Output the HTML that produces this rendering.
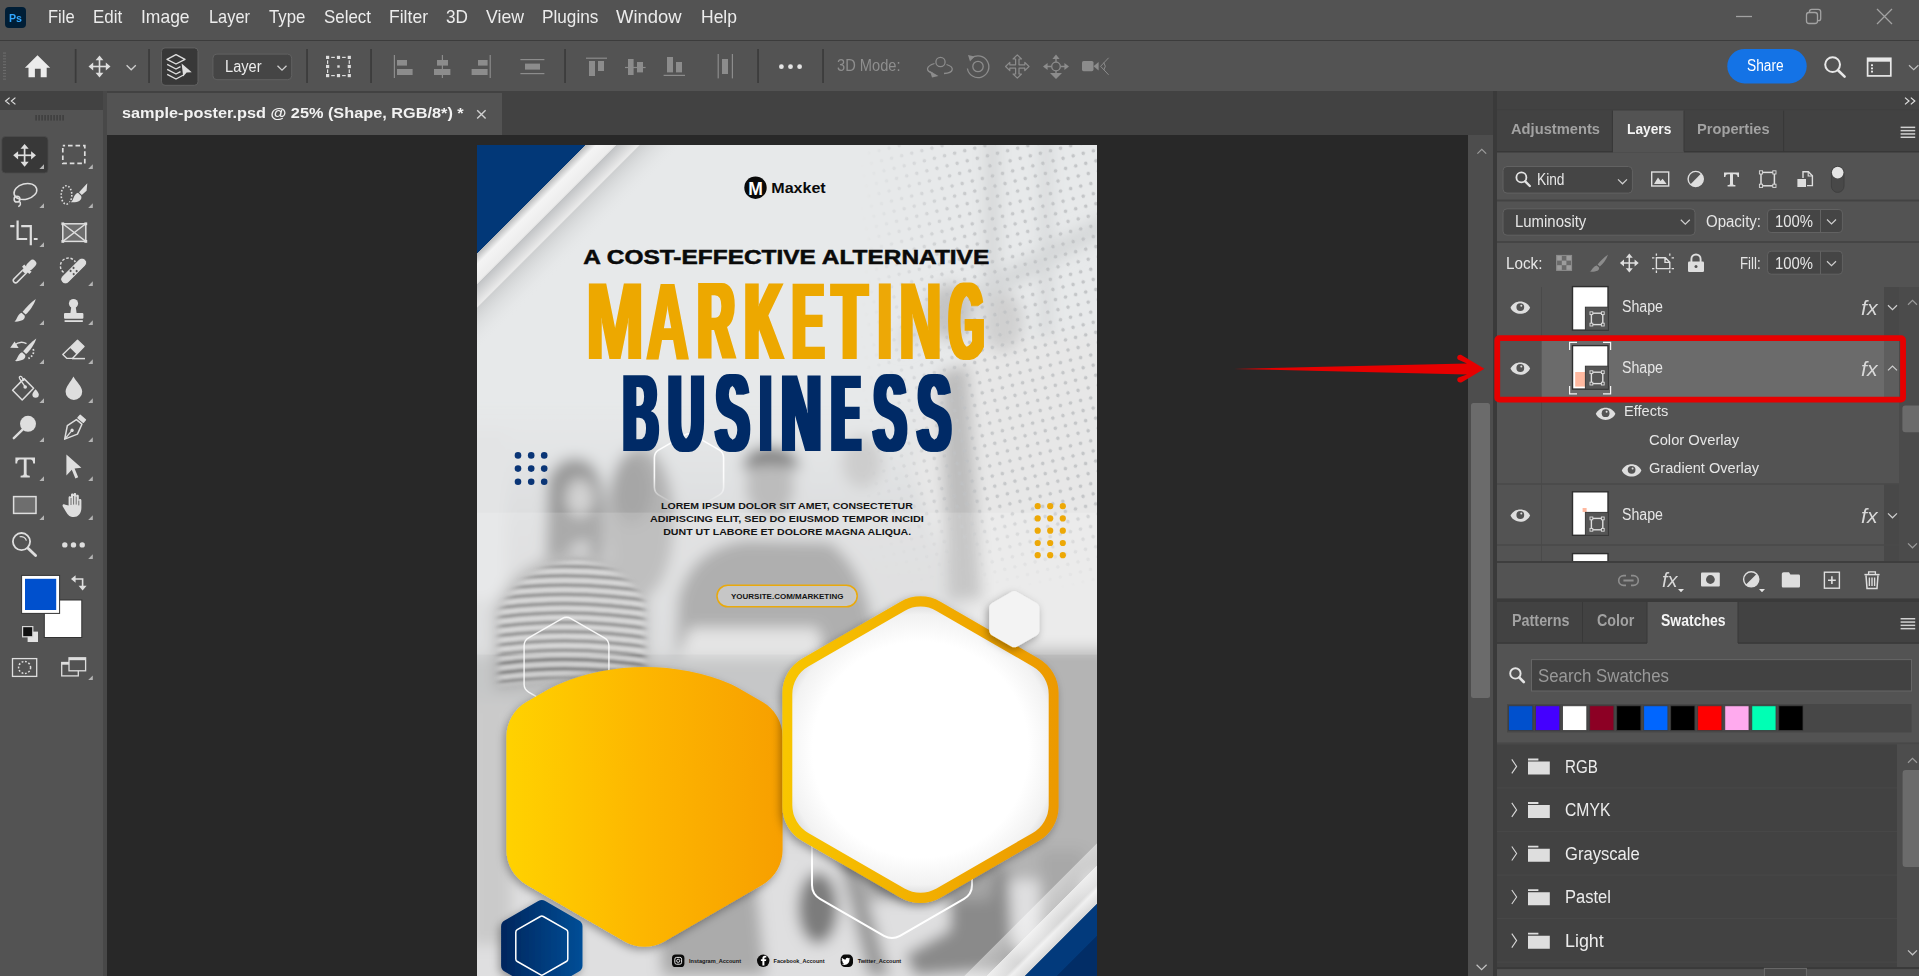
<!DOCTYPE html>
<html lang="en"><head><meta charset="utf-8"><title>sample-poster.psd @ 25% - Photoshop</title>
<style>
html,body{margin:0;padding:0;background:#535353;overflow:hidden}
body{width:1919px;height:976px;position:relative;font-family:"Liberation Sans",sans-serif;color:#e6e6e6}
.t{position:absolute;white-space:nowrap;transform-origin:0 0;line-height:1;display:block}
svg{display:block;overflow:hidden}
svg text{font-family:"Liberation Sans",sans-serif}
</style></head>
<body>
<div id="menubar" style="position:absolute;left:0;top:0;width:1919px;height:40px;background:#535353;border-bottom:1.5px solid #3c3c3c">
<div style="position:absolute;left:4.5px;top:7px;width:21px;height:20.5px;border-radius:4px;background:#001e36"></div>
<span class="t" style="left:8.6px;top:12.5px;font-size:11.5px;color:#31a8ff;font-weight:bold;transform:scaleX(0.9242);">Ps</span>
<span class="t" style="left:48.0px;top:7.8px;font-size:18.2px;color:#ececec;transform:scaleX(0.9070);">File</span>
<span class="t" style="left:93.4px;top:7.8px;font-size:18.2px;color:#ececec;transform:scaleX(0.9311);">Edit</span>
<span class="t" style="left:141.4px;top:7.8px;font-size:18.2px;color:#ececec;transform:scaleX(0.9608);">Image</span>
<span class="t" style="left:209.0px;top:7.8px;font-size:18.2px;color:#ececec;transform:scaleX(0.9005);">Layer</span>
<span class="t" style="left:268.6px;top:7.8px;font-size:18.2px;color:#ececec;transform:scaleX(0.9225);">Type</span>
<span class="t" style="left:324.0px;top:7.8px;font-size:18.2px;color:#ececec;transform:scaleX(0.9291);">Select</span>
<span class="t" style="left:389.0px;top:7.8px;font-size:18.2px;color:#ececec;transform:scaleX(0.9643);">Filter</span>
<span class="t" style="left:445.6px;top:7.8px;font-size:18.2px;color:#ececec;transform:scaleX(0.9456);">3D</span>
<span class="t" style="left:486.0px;top:7.8px;font-size:18.2px;color:#ececec;transform:scaleX(0.9713);">View</span>
<span class="t" style="left:542.0px;top:7.8px;font-size:18.2px;color:#ececec;transform:scaleX(0.9448);">Plugins</span>
<span class="t" style="left:616.4px;top:7.8px;font-size:18.2px;color:#ececec;transform:scaleX(1.0134);">Window</span>
<span class="t" style="left:701.0px;top:7.8px;font-size:18.2px;color:#ececec;transform:scaleX(0.9617);">Help</span>
<svg style="position:absolute;left:1720px;top:0px;" width="199" height="40" viewBox="0 0 199 40"><g stroke="#a2a2a2" stroke-width="1.3" fill="none"><path d="M16,16.5 H32"/><rect x="86.5" y="12.5" width="11" height="11" rx="2.5"/><path d="M89.5,12 V11.5 a2.2,2.2 0 0 1 2.2,-2.2 H98.2 a2.5,2.5 0 0 1 2.5,2.5 V18.5 a2.2,2.2 0 0 1 -2.2,2.2 H98"/><path d="M157,9 L172,24 M172,9 L157,24"/></g></svg>
</div>
<div id="optionsbar" style="position:absolute;left:0;top:41.5px;width:1919px;height:49.5px;background:#535353"></div>
<svg style="position:absolute;left:0px;top:41px;" width="1919" height="50" viewBox="0 41 1919 50"><rect x="3" y="52.5" width="3" height="1.1" fill="#6c6c6c"/><rect x="3" y="55.4" width="3" height="1.1" fill="#6c6c6c"/><rect x="3" y="58.3" width="3" height="1.1" fill="#6c6c6c"/><rect x="3" y="61.2" width="3" height="1.1" fill="#6c6c6c"/><rect x="3" y="64.1" width="3" height="1.1" fill="#6c6c6c"/><rect x="3" y="67.0" width="3" height="1.1" fill="#6c6c6c"/><rect x="3" y="69.9" width="3" height="1.1" fill="#6c6c6c"/><rect x="3" y="72.8" width="3" height="1.1" fill="#6c6c6c"/><rect x="3" y="75.7" width="3" height="1.1" fill="#6c6c6c"/><rect x="3" y="78.6" width="3" height="1.1" fill="#6c6c6c"/><rect x="74.8" y="49" width="1.7" height="34" fill="#3b3b3b"/><rect x="148.2" y="49" width="1.7" height="34" fill="#3b3b3b"/><rect x="306.2" y="49" width="1.7" height="34" fill="#3b3b3b"/><rect x="370.2" y="49" width="1.7" height="34" fill="#3b3b3b"/><rect x="564.2" y="49" width="1.7" height="34" fill="#3b3b3b"/><rect x="757.2" y="49" width="1.7" height="34" fill="#3b3b3b"/><rect x="822.2" y="49" width="1.7" height="34" fill="#3b3b3b"/><path fill="#ececec" d="M37.5,55.2 L50.2,67.7 L46.7,67.7 L46.7,77.2 L40.7,77.2 L40.7,68.8 L34.9,68.8 L34.9,77.2 L28.5,77.2 L28.5,67.7 L24.9,67.7 Z"/><g fill="#dedede" stroke="none"><rect x="90.5" y="65.7" width="18" height="1.6"/><rect x="98.7" y="57.5" width="1.6" height="18"/><path d="M99.5,55.5 l3.9,4.7 h-7.8z M99.5,77.5 l3.9,-4.7 h-7.8z M88.5,66.5 l4.7,-3.9 v7.8z M110.5,66.5 l-4.7,-3.9 v7.8z"/></g><path d="M126.6,65.2 L131.2,69.8 L135.8,65.2" fill="none" stroke="#cfcfcf" stroke-width="1.3"/><rect x="161.5" y="47.9" width="36.5" height="37.4" rx="3.5" fill="#383838" stroke="#626262" stroke-width="1"/><g fill="none" stroke="#dedede" stroke-width="1.4" stroke-linejoin="round"><path d="M176,54.6 L185,59.3 L176,64 L167,59.3 Z"/><path d="M167.2,64.3 L176,69 L180.5,66.6"/><path d="M167.2,69.3 L176,74 L180.5,71.6"/><path d="M167.2,74.3 L176,79 L183.5,75"/></g><path fill="#dedede" d="M181.6,63.4 L191.8,72.2 L186.6,72.6 L183.2,76.6 Z"/><rect x="212.9" y="54.1" width="78.8" height="25.6" rx="4" fill="#454545" stroke="#626262" stroke-width="1"/><path d="M277.5,65.8 L282,70.2 L286.5,65.8" fill="none" stroke="#cfcfcf" stroke-width="1.3"/><g fill="#dedede"><rect x="326.0" y="55.8" width="3.2" height="3.2"/><rect x="326.0" y="64.9" width="3.2" height="3.2"/><rect x="326.0" y="74.0" width="3.2" height="3.2"/><rect x="336.9" y="55.8" width="3.2" height="3.2"/><rect x="337.3" y="65.3" width="2.4" height="2.4"/><rect x="336.9" y="74.0" width="3.2" height="3.2"/><rect x="347.7" y="55.8" width="3.2" height="3.2"/><rect x="347.7" y="64.9" width="3.2" height="3.2"/><rect x="347.7" y="74.0" width="3.2" height="3.2"/><rect x="331.2" y="56.8" width="3.6" height="1.2"/><rect x="342.1" y="56.8" width="3.6" height="1.2"/><rect x="331.2" y="75.0" width="3.6" height="1.2"/><rect x="342.1" y="75.0" width="3.6" height="1.2"/><rect x="327.0" y="60.3" width="1.2" height="3.6"/><rect x="327.0" y="69.4" width="1.2" height="3.6"/><rect x="348.7" y="60.3" width="1.2" height="3.6"/><rect x="348.7" y="69.4" width="1.2" height="3.6"/></g><g fill="#8c8c8c"><rect x="393.8" y="55" width="1.2" height="23"/><rect x="397" y="60" width="10" height="5.6"/><rect x="397" y="69" width="15.6" height="6"/><rect x="441.8" y="55" width="1.2" height="23"/><rect x="437" y="60" width="11" height="5.6"/><rect x="434" y="69" width="16.4" height="6"/><rect x="489.6" y="55" width="1.2" height="23"/><rect x="478" y="60" width="9.6" height="5.6"/><rect x="471.6" y="69" width="16" height="6"/><rect x="520.4" y="59" width="24" height="1.2"/><rect x="520.4" y="73" width="24" height="1.2"/><rect x="525" y="63.6" width="15" height="6"/><rect x="586" y="57.6" width="21" height="1.2"/><rect x="589" y="61" width="6" height="15"/><rect x="598" y="61" width="6" height="10"/><rect x="625" y="66.9" width="20.6" height="1.2"/><rect x="628" y="59" width="5.6" height="16"/><rect x="637" y="62" width="6" height="10.4"/><rect x="663.6" y="74.8" width="21.4" height="1.2"/><rect x="667" y="57" width="6" height="15.4"/><rect x="676" y="62" width="6" height="10.4"/><rect x="717.6" y="54" width="1.2" height="24.4"/><rect x="731.8" y="54" width="1.2" height="24.4"/><rect x="722" y="59" width="6" height="15"/></g><g fill="#e4e4e4"><circle cx="781.4" cy="66.7" r="2.4"/><circle cx="790.5" cy="66.7" r="2.4"/><circle cx="799.6" cy="66.7" r="2.4"/></g><g fill="none" stroke="#8c8c8c" stroke-width="1.3"><circle cx="940.5" cy="62" r="4.6"/><path d="M934.5,63.5 C926,66 925,71 933,73.5 M944,73.5 C954,73 955,67 946.5,64.5"/><circle cx="978" cy="66.5" r="5.2"/><path d="M971.5,58.2 A10.8,10.8 0 1 1 967.4,68.5"/></g><path fill="#8c8c8c" d="M930,71 L938.5,76 L932,77.5 Z M968,55 L974.5,56.5 L970,61.5 Z"/><path d="M1017.3,54.8 l4.2,4.2 h-2.5 V64.8 H1024.8 v-2.5 l4.2,4.2 l-4.2,4.2 v-2.5 H1019.0 V74.0 h2.5 l-4.2,4.2 l-4.2,-4.2 h2.5 V68.2 H1009.8 v2.5 l-4.2,-4.2 l4.2,-4.2 v2.5 H1015.5999999999999 V59.0 h-2.5 Z" fill="none" stroke="#8c8c8c" stroke-width="1.2" stroke-linejoin="round"/><circle cx="1056" cy="66.5" r="4.3" fill="none" stroke="#8c8c8c" stroke-width="1.3"/><path fill="#8c8c8c" d="M1056,54.5 l3.6,4.4 h-7.2z M1043,66.5 l4.6,-3.6 v7.2z M1069,66.5 l-4.6,-3.6 v7.2z M1056,79.0 l6,-6 h-12z"/><g stroke="#8c8c8c" stroke-width="1.4"><path d="M1056,58.5 v3.5 M1047,66.5 h4.5 M1065,66.5 h-4.5 M1056,73.5 v-3"/></g><rect x="1082" y="61" width="11.5" height="10.2" rx="1.6" fill="#8c8c8c"/><path fill="#8c8c8c" d="M1093.5,66.2 L1098.6,62 V70.6 Z"/><path d="M1108.6,57.8 L1100.6,66.3 L1108.6,74.8" fill="none" stroke="#8c8c8c" stroke-width="1"/><path d="M1103.8,62.6 Q1106.8,66.3 1103.8,70" fill="none" stroke="#8c8c8c" stroke-width="1"/><rect x="1727.3" y="49" width="79.4" height="34.4" rx="17.2" fill="#1473e6"/><circle cx="1832.6" cy="64.6" r="7.4" fill="none" stroke="#e8e8e8" stroke-width="2"/><path d="M1838,70.2 L1844.6,76.6" stroke="#e8e8e8" stroke-width="2.6" stroke-linecap="round"/><rect x="1867.6" y="58.3" width="23.2" height="17.6" fill="none" stroke="#e8e8e8" stroke-width="1.7"/><rect x="1867.6" y="58.3" width="23.2" height="3.4" fill="#e8e8e8"/><g fill="#e8e8e8"><rect x="1871" y="64.3" width="2" height="1.8"/><rect x="1871" y="67.5" width="2" height="1.8"/><rect x="1871" y="70.7" width="2" height="1.8"/></g><path d="M1909,65.3 L1913.7,69.6 L1918.4,65.3" fill="none" stroke="#bdbdbd" stroke-width="1.2"/></svg>
<span class="t" style="left:225.0px;top:58.6px;font-size:15.8px;color:#ececec;transform:scaleX(0.9260);">Layer</span>
<span class="t" style="left:837.0px;top:58.0px;font-size:15.6px;color:#8e8e8e;transform:scaleX(0.9403);">3D Mode:</span>
<span class="t" style="left:1746.7px;top:58.4px;font-size:15.6px;color:#ffffff;transform:scaleX(0.8792);">Share</span>
<div id="tools-head" style="position:absolute;left:0;top:91px;width:103px;height:18.5px;background:#424242"></div>
<div id="tools" style="position:absolute;left:0;top:109.5px;width:103px;height:867px;background:#535353"></div>
<svg style="position:absolute;left:0px;top:91px;" width="104" height="885" viewBox="0 91 104 885"><path d="M9.6,97.6 L5.6,101 L9.6,104.4 M15.4,97.6 L11.4,101 L15.4,104.4" fill="none" stroke="#e0e0e0" stroke-width="1.2"/><rect x="35.3" y="115" width="1.6" height="5.6" fill="#3f3f3f"/><rect x="38.3" y="115" width="1.6" height="5.6" fill="#3f3f3f"/><rect x="41.3" y="115" width="1.6" height="5.6" fill="#3f3f3f"/><rect x="44.3" y="115" width="1.6" height="5.6" fill="#3f3f3f"/><rect x="47.3" y="115" width="1.6" height="5.6" fill="#3f3f3f"/><rect x="50.3" y="115" width="1.6" height="5.6" fill="#3f3f3f"/><rect x="53.3" y="115" width="1.6" height="5.6" fill="#3f3f3f"/><rect x="56.3" y="115" width="1.6" height="5.6" fill="#3f3f3f"/><rect x="59.3" y="115" width="1.6" height="5.6" fill="#3f3f3f"/><rect x="62.3" y="115" width="1.6" height="5.6" fill="#3f3f3f"/><rect x="1.8" y="136.6" width="46.2" height="36.4" rx="3.5" fill="#383838" stroke="#4b4b4b" stroke-width="0.8"/><path d="M44.0,164.3 V168.9 H39.4 Z" fill="#b4b4b4"/><path d="M92.8,164.3 V168.9 H88.2 Z" fill="#b4b4b4"/><path d="M44.0,203.3 V207.9 H39.4 Z" fill="#b4b4b4"/><path d="M92.8,203.3 V207.9 H88.2 Z" fill="#b4b4b4"/><path d="M44.0,242.3 V246.9 H39.4 Z" fill="#b4b4b4"/><path d="M44.0,281.3 V285.90000000000003 H39.4 Z" fill="#b4b4b4"/><path d="M92.8,281.3 V285.90000000000003 H88.2 Z" fill="#b4b4b4"/><path d="M44.0,320.3 V324.90000000000003 H39.4 Z" fill="#b4b4b4"/><path d="M92.8,320.3 V324.90000000000003 H88.2 Z" fill="#b4b4b4"/><path d="M44.0,359.3 V363.90000000000003 H39.4 Z" fill="#b4b4b4"/><path d="M92.8,359.3 V363.90000000000003 H88.2 Z" fill="#b4b4b4"/><path d="M44.0,398.3 V402.90000000000003 H39.4 Z" fill="#b4b4b4"/><path d="M92.8,398.3 V402.90000000000003 H88.2 Z" fill="#b4b4b4"/><path d="M44.0,437.3 V441.90000000000003 H39.4 Z" fill="#b4b4b4"/><path d="M92.8,437.3 V441.90000000000003 H88.2 Z" fill="#b4b4b4"/><path d="M44.0,476.3 V480.90000000000003 H39.4 Z" fill="#b4b4b4"/><path d="M92.8,476.3 V480.90000000000003 H88.2 Z" fill="#b4b4b4"/><path d="M44.0,515.3 V519.9 H39.4 Z" fill="#b4b4b4"/><path d="M92.8,515.3 V519.9 H88.2 Z" fill="#b4b4b4"/><path d="M92.8,554.3 V558.9 H88.2 Z" fill="#b4b4b4"/><path d="M92.8,675.5 V680.1 H88.2 Z" fill="#b4b4b4"/><g fill="#dedede"><rect x="15.200000000000001" y="154.45000000000002" width="18.8" height="1.7"/><rect x="23.75" y="145.9" width="1.7" height="18.8"/><path d="M24.6,143.9 l4.1,4.8999999999999995 h-8.2z M24.6,166.70000000000002 l4.1,-4.8999999999999995 h-8.2z M13.200000000000001,155.3 l4.8999999999999995,-4.1 v8.2z M36.0,155.3 l-4.8999999999999995,-4.1 v8.2z"/></g><rect x="62.8" y="145.6" width="22" height="17.8" fill="none" stroke="#dedede" stroke-width="1.7" stroke-dasharray="4.6 2.9" stroke-dashoffset="2.3"/><g fill="none" stroke="#dedede" stroke-width="1.5"><ellipse cx="25.4" cy="191.5" rx="11.6" ry="7.8" transform="rotate(-14 25.4 191.5)"/><circle cx="17" cy="199.2" r="2.9"/><path d="M19,201.2 C21.5,203 20.5,206 18.2,206.6"/></g><ellipse cx="66.5" cy="195" rx="5.3" ry="9.2" fill="none" stroke="#dedede" stroke-width="1.6" stroke-dasharray="1.6 1.7"/><path fill="#dedede" stroke="#535353" stroke-width="1.4" paint-order="stroke" d="M87.3,183.2 L86.6,190.8 L81.8,195 L79,192.2 Z M78,192.8 L81.2,196 C82.6,200.6 77.4,202.8 70.8,202.2 C74,200.4 73,194.6 78,192.8 Z"/><g fill="none" stroke="#dedede" stroke-width="2.2"><path d="M17.6,220.4 V239 H27.2 M21.2,226.2 H30.8 V245.2"/><path d="M10.2,226.2 H14.4 M33.8,239 H37.6"/></g><rect x="62.8" y="223.8" width="23" height="17.6" fill="#6e6e6e" stroke="#dedede" stroke-width="1.5"/><path d="M62.8,223.8 L85.8,241.4 M85.8,223.8 L62.8,241.4" stroke="#dedede" stroke-width="1.4"/><g fill="#dedede"><rect x="61.4" y="222.4" width="2.8" height="2.8"/><rect x="84.4" y="222.4" width="2.8" height="2.8"/><rect x="61.4" y="240" width="2.8" height="2.8"/><rect x="84.4" y="240" width="2.8" height="2.8"/></g><g transform="rotate(45 24.6 271.5)"><path d="M22.3,272.4 V284.2 A2.3,2.3 0 0 0 26.9,284.2 V272.4" fill="none" stroke="#dedede" stroke-width="1.5"/><rect x="19.4" y="266.8" width="10.4" height="3.2" fill="#dedede"/><rect x="21" y="256.6" width="7.2" height="11" rx="3.4" fill="#dedede"/><rect x="21.6" y="269" width="6" height="3.6" fill="#dedede"/></g><circle cx="68.4" cy="266" r="8" fill="none" stroke="#dedede" stroke-width="1.4" stroke-dasharray="2.6 1.8"/><g transform="rotate(-45 73.7 271)"><rect x="57.4" y="266.4" width="32.6" height="9.2" rx="4.6" fill="#dedede" stroke="#535353" stroke-width="1"/><g fill="#535353"><rect x="70.6" y="267.8" width="1.9" height="1.9"/><rect x="74.8" y="267.8" width="1.9" height="1.9"/><rect x="70.6" y="272.2" width="1.9" height="1.9"/><rect x="74.8" y="272.2" width="1.9" height="1.9"/></g></g><g transform="translate(0,0) scale(1.0)"><path fill="#dedede" d="M35.8,299 C34,305 29.5,311 25.6,314.6 L22.6,311.8 C26,307.5 31,302 35.8,299 Z"/><path fill="#dedede" d="M21.6,312.8 L24.6,315.6 C26,319.5 21,322 14.4,321.6 C17.4,320 16.8,314.6 21.6,312.8 Z"/></g><g fill="#dedede"><circle cx="73.5" cy="303.6" r="4.6"/><path d="M71.4,306 H75.6 L76.6,313 H70.4 Z"/><rect x="64" y="313" width="19.4" height="5.8" rx="1"/><rect x="64.6" y="320.2" width="18.2" height="1.8"/></g><g transform="translate(0.5,39.5) scale(1.0)"><path fill="#dedede" d="M35.8,299 C34,305 29.5,311 25.6,314.6 L22.6,311.8 C26,307.5 31,302 35.8,299 Z"/><path fill="#dedede" d="M21.6,312.8 L24.6,315.6 C26,319.5 21,322 14.4,321.6 C17.4,320 16.8,314.6 21.6,312.8 Z"/></g><path d="M14,345.5 Q20,340 26.5,343.6" fill="none" stroke="#dedede" stroke-width="1.4"/><path fill="#dedede" d="M10.2,347.8 L14.6,341.6 L18.6,348 Z"/><path d="M33.2,349 Q35,355 28.4,358.4" fill="none" stroke="#dedede" stroke-width="1.7" stroke-dasharray="1.7 1.7"/><path d="M77.5,340.2 L84,346.6 L72.4,358.4 H67 L62.8,354.4 Z" fill="none" stroke="#dedede" stroke-width="1.4" stroke-linejoin="round"/><path fill="#dedede" d="M77.5,340.2 L84,346.6 L76.6,354.2 L70,347.8 Z"/><path d="M72,358.6 H85" stroke="#dedede" stroke-width="1.5"/><path d="M24,378.6 L33.6,388.2 L22.2,400 L12.6,390.2 Z" fill="none" stroke="#dedede" stroke-width="1.5" stroke-linejoin="round"/><path d="M25.2,386.8 L19.6,378.6 C18.4,376 21.4,375.4 22.4,378 L24,381" fill="none" stroke="#dedede" stroke-width="1.3"/><circle cx="25.2" cy="387" r="1.8" fill="#dedede"/><path fill="#dedede" d="M35.6,389.2 C37.6,391.4 38.8,393 38.8,394.6 A3.2,3.2 0 0 1 32.4,394.6 C32.4,393 33.6,391.4 35.6,389.2 Z"/><path fill="#dedede" d="M73.4,376.6 C76.4,382 82.2,386.6 82.2,391.8 A8.3,8.2 0 0 1 65.6,391.8 C65.6,386.6 70.8,382 73.4,376.6 Z"/><circle cx="28" cy="423.8" r="8" fill="#dedede"/><path d="M22.6,429.6 L13.8,438.2" stroke="#dedede" stroke-width="2.4" stroke-linecap="round"/><g transform="rotate(40 74 428)"><path d="M70.4,420 H77.6 L80.6,430.5 L74,442.5 L67.4,430.5 Z" fill="none" stroke="#dedede" stroke-width="1.5" stroke-linejoin="round"/><path d="M74,442 V432" stroke="#dedede" stroke-width="1.3"/><circle cx="74" cy="431" r="1.7" fill="#dedede"/><rect x="69.8" y="413.6" width="8.4" height="4.8" rx="0.8" fill="#dedede"/></g><path fill="#dedede" d="M15.4,457.4 H35 V463.6 H33.2 C33,460.6 32.4,459.6 29.6,459.6 H26.6 V473.6 C26.6,475.2 27.2,475.6 29.8,475.8 V477.4 H20.6 V475.8 C23.2,475.6 23.8,475.2 23.8,473.6 V459.6 H20.8 C18,459.6 17.4,460.6 17.2,463.6 H15.4 Z"/><path fill="#dedede" d="M66.4,454.4 L81.4,467.8 L74.6,468.6 L78.2,477.2 L75.4,478.4 L71.8,469.8 L66.4,475.4 Z"/><rect x="13.6" y="496.6" width="22.4" height="16.8" fill="#6e6e6e" stroke="#dedede" stroke-width="1.5"/><path fill="#dedede" d="M68.6,505.4 V497.6 C68.6,495.8 71,495.8 71,497.6 V494.8 C71,493 73.6,493 73.6,494.8 V494.4 C73.6,492.6 76.2,492.6 76.2,494.4 V496 C76.2,494.4 78.8,494.4 78.8,496 V500.4 C78.8,498.6 81.4,498.6 81.4,500.4 V507.6 C81.4,513.4 78.4,517 73.8,517 C69.8,517 68,515 65.8,511.4 L62.8,506.4 C61.8,504.6 64,503.4 65.4,504.8 Z"/><g stroke="#535353" stroke-width="0.8"><path d="M71,498 V505 M73.6,496 V504.6 M76.2,496.6 V504.6 M78.8,500.6 V505.4"/></g><circle cx="21.5" cy="541.6" r="8.6" fill="none" stroke="#dedede" stroke-width="1.8"/><path d="M28,548.2 L35.6,555.6" stroke="#dedede" stroke-width="2.8" stroke-linecap="round"/><path d="M19.6,536.8 A5.4,5.4 0 0 1 26.4,540.6" fill="none" stroke="#dedede" stroke-width="1.2"/><g fill="#dedede"><circle cx="64.8" cy="544.9" r="2.7"/><circle cx="73.5" cy="544.9" r="2.7"/><circle cx="82.2" cy="544.9" r="2.7"/></g><rect x="44.3" y="600" width="37.5" height="37.5" fill="#ffffff" stroke="#333" stroke-width="1"/><rect x="21.6" y="575.4" width="38" height="38" fill="#ffffff" stroke="#333" stroke-width="1"/><rect x="25" y="578.8" width="31.2" height="31.2" fill="#0050cd"/><path d="M74.4,579 H82.6 V587" fill="none" stroke="#dedede" stroke-width="1.6"/><path fill="#dedede" d="M71,579 L75.6,575.2 V582.8 Z M82.6,590.6 L78.6,585.8 H86.6 Z"/><rect x="27.6" y="631.6" width="10.4" height="10.4" fill="#e2e2e2"/><rect x="22.6" y="626.6" width="10.2" height="10.2" fill="#111" stroke="#d6d6d6" stroke-width="1.2"/><rect x="12.5" y="658.6" width="24.2" height="17.8" fill="none" stroke="#dedede" stroke-width="1.3"/><circle cx="24.6" cy="667.5" r="6" fill="none" stroke="#dedede" stroke-width="1.5" stroke-dasharray="1.8 1.7"/><rect x="61.7" y="662.5" width="16.6" height="13.4" fill="none" stroke="#dedede" stroke-width="1.3"/><rect x="61.7" y="662.5" width="16.6" height="2.2" fill="#dedede"/><rect x="69" y="657.8" width="16.6" height="13" fill="#535353" stroke="#dedede" stroke-width="1.3"/><rect x="69" y="657.8" width="16.6" height="2.4" fill="#dedede"/></svg>
<div id="docbar" style="position:absolute;left:103px;top:91px;width:1394px;height:44px;background:#424242"></div>
<div style="position:absolute;left:103px;top:91px;width:4.4px;height:885px;background:#484848"></div>
<div id="doctab" style="position:absolute;left:107.4px;top:93px;width:394.6px;height:42px;background:#535353"></div>
<span class="t" style="left:122.4px;top:105.3px;font-size:15.4px;color:#f2f2f2;font-weight:bold;transform:scaleX(1.0581);">sample-poster.psd @ 25% (Shape, RGB/8*) *</span>
<svg style="position:absolute;left:474px;top:106px;" width="16" height="16" viewBox="0 0 16 16"><path d="M3.2,4.2 L11.6,12.6 M11.6,4.2 L3.2,12.6" stroke="#d0d0d0" stroke-width="1.4" fill="none"/></svg>
<div id="canvas" style="position:absolute;left:107px;top:135px;width:1361px;height:841px;background:#282828"></div>
<div style="position:absolute;left:1468px;top:135px;width:25.4px;height:841px;background:#4d4d4d"></div>
<div style="position:absolute;left:1493.4px;top:91px;width:3.6px;height:885px;background:#3a3a3a"></div>
<div style="position:absolute;left:1471px;top:403px;width:18.6px;height:295px;background:#6b6b6b;border-radius:2.5px"></div>
<svg style="position:absolute;left:1468px;top:135px;" width="26" height="841" viewBox="0 0 26 841"><path d="M9.4,18.6 L13.8,14.4 L18.2,18.6" fill="none" stroke="#9c9c9c" stroke-width="1.2"/><path d="M8.6,829.8 L13.6,834.6 L18.6,829.8" fill="none" stroke="#c4c4c4" stroke-width="1.2"/></svg>
<svg style="position:absolute;left:477px;top:145px;" width="620" height="831" viewBox="477 145 620 831"><defs><clipPath id="pclip"><rect x="477" y="145" width="620" height="831"/></clipPath><filter id="b12" x="-20%" y="-20%" width="140%" height="140%"><feGaussianBlur stdDeviation="12"/></filter><filter id="b6" x="-20%" y="-20%" width="140%" height="140%"><feGaussianBlur stdDeviation="7"/></filter><filter id="b3" x="-30%" y="-30%" width="160%" height="160%"><feGaussianBlur stdDeviation="3"/></filter><filter id="fat" x="-5%" y="-5%" width="110%" height="110%"><feMorphology operator="dilate" radius="1.9 0"/></filter><filter id="ds" x="-30%" y="-30%" width="160%" height="160%"><feDropShadow dx="-2" dy="3" stdDeviation="4" flood-color="#000" flood-opacity="0.35"/></filter><linearGradient id="gOr" x1="506" y1="0" x2="783" y2="0" gradientUnits="userSpaceOnUse"><stop offset="0" stop-color="#ffd200"/><stop offset="0.5" stop-color="#fdb600"/><stop offset="1" stop-color="#f79f00"/></linearGradient><linearGradient id="gRing" x1="782" y1="0" x2="1059" y2="0" gradientUnits="userSpaceOnUse"><stop offset="0" stop-color="#f8c600"/><stop offset="1" stop-color="#ec9900"/></linearGradient><linearGradient id="gNavy" x1="500" y1="0" x2="584" y2="0" gradientUnits="userSpaceOnUse"><stop offset="0" stop-color="#02255c"/><stop offset="1" stop-color="#034f98"/></linearGradient><linearGradient id="gTL" x1="477" y1="145" x2="581" y2="249" gradientUnits="userSpaceOnUse"><stop offset="0" stop-color="#023878"/><stop offset="0.5216" stop-color="#023878"/><stop offset="0.5217" stop-color="#b9babb"/><stop offset="0.575" stop-color="#f4f4f4"/><stop offset="0.66" stop-color="#ededed"/><stop offset="0.672" stop-color="#dcdcdc"/><stop offset="0.673" stop-color="#c2c4c6"/><stop offset="0.775" stop-color="#eaeaea"/><stop offset="0.783" stop-color="#e4e4e4"/><stop offset="0.784" stop-color="#cdcfd0"/><stop offset="1" stop-color="#e8eaeb" stop-opacity="0"/></linearGradient><linearGradient id="gBR" x1="1000" y1="900" x2="1086.5" y2="986.5" gradientUnits="userSpaceOnUse"><stop offset="0" stop-color="#ffffff" stop-opacity="0"/><stop offset="0.231" stop-color="#ffffff" stop-opacity="0"/><stop offset="0.232" stop-color="#ffffff" stop-opacity="0.45"/><stop offset="0.363" stop-color="#ffffff" stop-opacity="0.3"/><stop offset="0.364" stop-color="#f6f6f6" stop-opacity="0.85"/><stop offset="0.47" stop-color="#e2e2e2" stop-opacity="0.8"/><stop offset="0.50" stop-color="#f4f4f4" stop-opacity="0.9"/><stop offset="0.583" stop-color="#d8d8d8" stop-opacity="0.9"/><stop offset="0.584" stop-color="#023a7c"/><stop offset="0.768" stop-color="#023a7c"/><stop offset="0.769" stop-color="#022d66"/><stop offset="1" stop-color="#022d66"/></linearGradient><radialGradient id="gIn" cx="920.5" cy="749.7" r="150" gradientUnits="userSpaceOnUse"><stop offset="0.72" stop-color="#ffffff"/><stop offset="0.9" stop-color="#f2f2f2"/><stop offset="1" stop-color="#d4d4d4"/></radialGradient><pattern id="dots" width="10.4" height="10.4" patternUnits="userSpaceOnUse" patternTransform="rotate(-14)"><circle cx="5.2" cy="5.2" r="1.8" fill="#c0c2c4"/></pattern><linearGradient id="gDotFade" x1="860" y1="0" x2="1097" y2="0" gradientUnits="userSpaceOnUse"><stop offset="0" stop-color="#fff" stop-opacity="0"/><stop offset="0.45" stop-color="#fff" stop-opacity="0.9"/><stop offset="1" stop-color="#fff" stop-opacity="1"/></linearGradient><linearGradient id="gDotFadeV" x1="0" y1="145" x2="0" y2="590" gradientUnits="userSpaceOnUse"><stop offset="0" stop-color="#000" stop-opacity="0"/><stop offset="0.8" stop-color="#000" stop-opacity="0"/><stop offset="1" stop-color="#000" stop-opacity="1"/></linearGradient><mask id="mDots"><rect x="477" y="145" width="620" height="831" fill="url(#gDotFade)"/><rect x="477" y="145" width="620" height="831" fill="url(#gDotFadeV)"/></mask><linearGradient id="gHexFade" x1="0" y1="436" x2="0" y2="505" gradientUnits="userSpaceOnUse"><stop offset="0" stop-color="#fff" stop-opacity="1"/><stop offset="0.6" stop-color="#fff" stop-opacity="0.9"/><stop offset="1" stop-color="#fff" stop-opacity="0"/></linearGradient><linearGradient id="gBase" x1="0" y1="400" x2="0" y2="1040" gradientUnits="userSpaceOnUse"><stop offset="0" stop-color="#e7e9ea"/><stop offset="0.2" stop-color="#dcddde"/><stop offset="0.45" stop-color="#d6d7d8"/><stop offset="0.7" stop-color="#dadadb"/><stop offset="1" stop-color="#e0e0e1"/></linearGradient><clipPath id="dome"><circle cx="645" cy="892" r="225"/></clipPath><filter id="b1" x="-10%" y="-10%" width="120%" height="120%"><feGaussianBlur stdDeviation="1.1"/></filter><mask id="shirt"><path d="M499,614 Q520,566 578,560 Q624,566 644,602 L645,668 L499,684 Z" fill="#fff" filter="url(#b3)"/></mask><filter id="mk0" x="-15%" y="-5%" width="130%" height="110%"><feMorphology operator="dilate" radius="1.68 0"/></filter><filter id="mk1" x="-15%" y="-5%" width="130%" height="110%"><feMorphology operator="dilate" radius="2.49 0"/></filter><filter id="mk2" x="-15%" y="-5%" width="130%" height="110%"><feMorphology operator="dilate" radius="2.98 0"/></filter><filter id="mk3" x="-15%" y="-5%" width="130%" height="110%"><feMorphology operator="dilate" radius="2.91 0"/></filter><filter id="mk4" x="-15%" y="-5%" width="130%" height="110%"><feMorphology operator="dilate" radius="3.28 0"/></filter><filter id="mk5" x="-15%" y="-5%" width="130%" height="110%"><feMorphology operator="dilate" radius="2.60 0"/></filter><filter id="mk7" x="-15%" y="-5%" width="130%" height="110%"><feMorphology operator="dilate" radius="2.43 0"/></filter><filter id="mk8" x="-15%" y="-5%" width="130%" height="110%"><feMorphology operator="dilate" radius="3.46 0"/></filter><filter id="bs0" x="-15%" y="-5%" width="130%" height="110%"><feMorphology operator="dilate" radius="3.12 0"/></filter><filter id="bs1" x="-15%" y="-5%" width="130%" height="110%"><feMorphology operator="dilate" radius="3.07 0"/></filter><filter id="bs2" x="-15%" y="-5%" width="130%" height="110%"><feMorphology operator="dilate" radius="3.03 0"/></filter><filter id="bs4" x="-15%" y="-5%" width="130%" height="110%"><feMorphology operator="dilate" radius="2.66 0"/></filter><filter id="bs5" x="-15%" y="-5%" width="130%" height="110%"><feMorphology operator="dilate" radius="3.77 0"/></filter><filter id="bs6" x="-15%" y="-5%" width="130%" height="110%"><feMorphology operator="dilate" radius="3.10 0"/></filter><filter id="bs7" x="-15%" y="-5%" width="130%" height="110%"><feMorphology operator="dilate" radius="3.06 0"/></filter></defs><g clip-path="url(#pclip)" font-family="'Liberation Sans',sans-serif"><rect x="477" y="145" width="620" height="831" fill="#e7e9ea"/>
<g filter="url(#b6)"><rect x="440" y="400" width="700" height="640" fill="url(#gBase)"/><rect x="440" y="656" width="420" height="56" fill="#c6c7c8"/><rect x="440" y="850" width="700" height="160" fill="#dfdfe0"/><rect x="440" y="430" width="66" height="170" fill="#e3e4e5"/><rect x="985" y="120" width="14" height="300" fill="#d5d7d8"/><rect x="1040" y="120" width="12" height="300" fill="#d8dadb"/><path d="M900,330 L1110,210 L1110,232 L900,352 Z" fill="#d6d8d9"/><path d="M912,470 L930,380 L975,345 L1110,330 L1110,650 L990,650 L960,600 Z" fill="#e7e7e7"/><path d="M940,372 L968,366 L982,600 L948,600 Z" fill="#bdbdbd"/><ellipse cx="950" cy="312" rx="22" ry="28" fill="#c4c4c4"/><ellipse cx="1003" cy="322" rx="20" ry="30" fill="#d0d0d0"/><path d="M996,648 L1110,648 L1110,870 L1065,880 L1000,880 L1015,760 Z" fill="#b4b4b4"/><path d="M950,870 L1008,866 L1012,940 L1030,968 L915,976 L905,955 L950,930 Z" fill="#8a8a8a"/><path d="M1040,850 L1085,850 L1080,930 L1040,930 Z" fill="#a8a8a8"/><path d="M860,850 L1000,850 L990,900 L870,900 Z" fill="#a4a4a4"/><ellipse cx="770" cy="486" rx="24" ry="32" fill="#bcbcbc"/><path d="M742,470 Q745,446 772,447 Q798,448 800,470 Q772,458 742,470 Z" fill="#7f7f7f"/><path d="M678,600 Q690,548 745,540 L830,542 Q872,575 876,654 L676,654 Z" fill="#a0a0a0"/><ellipse cx="862" cy="462" rx="20" ry="26" fill="#cdcdcd"/><path d="M548,480 Q560,452 585,460 Q606,470 604,520 L606,612 L590,612 L588,540 L570,548 L566,620 L544,620 Z" fill="#9a9a9a"/><ellipse cx="580" cy="498" rx="14" ry="19" fill="#d2d2d2"/><path d="M494,610 Q515,556 580,552 Q630,560 648,600 L648,678 L494,690 Z" fill="#b1b1b1"/><ellipse cx="640" cy="522" rx="34" ry="76" fill="#b3b3b3"/><ellipse cx="632" cy="490" rx="20" ry="34" fill="#a6a6a6"/><path d="M690,628 L818,628 L824,658 L678,658 Z" fill="#e0e0e0"/><path d="M655,880 L755,872 L766,976 L662,976 Z" fill="#ababab"/><ellipse cx="818" cy="908" rx="20" ry="36" fill="#7c7c7c"/><path d="M838,856 L856,856 L890,976 L868,976 Z" fill="#9a9a9a"/><rect x="470" y="700" width="42" height="245" fill="#cacaca"/></g>
<g mask="url(#shirt)" opacity="0.6"><g filter="url(#b1)"><path d="M490,562.7 Q570,550.7 655,564.7" fill="none" stroke="#747474" stroke-width="4.2"/><path d="M490,567.4 Q570,555.4 655,569.4" fill="none" stroke="#e2e2e2" stroke-width="4.4"/><path d="M490,572.0 Q570,560.0 655,574.0" fill="none" stroke="#747474" stroke-width="4.2"/><path d="M490,576.6 Q570,564.6 655,578.6" fill="none" stroke="#e2e2e2" stroke-width="4.4"/><path d="M490,581.3 Q570,569.3 655,583.3" fill="none" stroke="#747474" stroke-width="4.2"/><path d="M490,585.9 Q570,573.9 655,587.9" fill="none" stroke="#e2e2e2" stroke-width="4.4"/><path d="M490,590.6 Q570,578.6 655,592.6" fill="none" stroke="#747474" stroke-width="4.2"/><path d="M490,595.2 Q570,583.2 655,597.2" fill="none" stroke="#e2e2e2" stroke-width="4.4"/><path d="M490,599.9 Q570,587.9 655,601.9" fill="none" stroke="#747474" stroke-width="4.2"/><path d="M490,604.5 Q570,592.5 655,606.5" fill="none" stroke="#e2e2e2" stroke-width="4.4"/><path d="M490,609.2 Q570,597.2 655,611.2" fill="none" stroke="#747474" stroke-width="4.2"/><path d="M490,613.9 Q570,601.9 655,615.9" fill="none" stroke="#e2e2e2" stroke-width="4.4"/><path d="M490,618.5 Q570,606.5 655,620.5" fill="none" stroke="#747474" stroke-width="4.2"/><path d="M490,623.1 Q570,611.1 655,625.1" fill="none" stroke="#e2e2e2" stroke-width="4.4"/><path d="M490,627.8 Q570,615.8 655,629.8" fill="none" stroke="#747474" stroke-width="4.2"/><path d="M490,632.4 Q570,620.4 655,634.4" fill="none" stroke="#e2e2e2" stroke-width="4.4"/><path d="M490,637.1 Q570,625.1 655,639.1" fill="none" stroke="#747474" stroke-width="4.2"/><path d="M490,641.8 Q570,629.8 655,643.8" fill="none" stroke="#e2e2e2" stroke-width="4.4"/><path d="M490,646.4 Q570,634.4 655,648.4" fill="none" stroke="#747474" stroke-width="4.2"/><path d="M490,651.0 Q570,639.0 655,653.0" fill="none" stroke="#e2e2e2" stroke-width="4.4"/><path d="M490,655.7 Q570,643.7 655,657.7" fill="none" stroke="#747474" stroke-width="4.2"/><path d="M490,660.4 Q570,648.4 655,662.4" fill="none" stroke="#e2e2e2" stroke-width="4.4"/><path d="M490,665.0 Q570,653.0 655,667.0" fill="none" stroke="#747474" stroke-width="4.2"/><path d="M490,669.6 Q570,657.6 655,671.6" fill="none" stroke="#e2e2e2" stroke-width="4.4"/><path d="M490,674.3 Q570,662.3 655,676.3" fill="none" stroke="#747474" stroke-width="4.2"/><path d="M490,679.0 Q570,667.0 655,681.0" fill="none" stroke="#e2e2e2" stroke-width="4.4"/><path d="M490,683.6 Q570,671.6 655,685.6" fill="none" stroke="#747474" stroke-width="4.2"/><path d="M490,688.2 Q570,676.2 655,690.2" fill="none" stroke="#e2e2e2" stroke-width="4.4"/><path d="M490,692.9 Q570,680.9 655,694.9" fill="none" stroke="#747474" stroke-width="4.2"/><path d="M490,697.5 Q570,685.5 655,699.5" fill="none" stroke="#e2e2e2" stroke-width="4.4"/></g></g>
<rect x="820" y="145" width="277" height="445" fill="url(#dots)" mask="url(#mDots)" opacity="0.9"/>
<rect x="477" y="512.6" width="620" height="142" fill="#ffffff" opacity="0.16"/>
<path d="M477,145 H690 L477,358 Z" fill="url(#gTL)"/>
<path d="M1097,976 V800 L921,976 Z" fill="url(#gBR)"/>
<circle cx="755.5" cy="187.7" r="11.2" fill="#0a0a0a"/>
<text x="748.2" y="194.6" font-size="17.6" font-weight="bold" fill="#ffffff" textLength="14.6" lengthAdjust="spacingAndGlyphs">M</text>
<text x="771.3" y="193.2" font-size="14.4" font-weight="bold" fill="#0a0a0a" textLength="54.4" lengthAdjust="spacingAndGlyphs">Maxket</text>
<path d="M684.5,435.1 A9,9 0 0 1 693.5,435.1 L719.1,449.9 A9,9 0 0 1 723.6,457.7 L723.6,487.3 A9,9 0 0 1 719.1,495.1 L693.5,509.9 A9,9 0 0 1 684.5,509.9 L658.9,495.1 A9,9 0 0 1 654.4,487.3 L654.4,457.7 A9,9 0 0 1 658.9,449.9 Z" fill="none" stroke="url(#gHexFade)" stroke-width="1.6"/>
<text x="583.3" y="264.3" font-size="20.2" font-weight="bold" fill="#0a0a0a" textLength="405.9" lengthAdjust="spacingAndGlyphs" stroke="#0a0a0a" stroke-width="0.5">A COST-EFFECTIVE ALTERNATIVE</text>
<g id="w-marketing" role="img" aria-label="MARKETING"><g filter="url(#mk0)"><text transform="translate(586.27,359.20) scale(0.6262,1)" font-size="110.18" font-weight="bold" fill="#eda806">M</text></g><g filter="url(#mk1)"><text transform="translate(646.76,359.20) scale(0.5237,1)" font-size="110.18" font-weight="bold" fill="#eda806">A</text></g><g filter="url(#mk2)"><text transform="translate(697.77,359.20) scale(0.4624,1)" font-size="110.18" font-weight="bold" fill="#eda806">R</text></g><g filter="url(#mk3)"><text transform="translate(744.63,359.20) scale(0.4719,1)" font-size="110.18" font-weight="bold" fill="#eda806">K</text></g><g filter="url(#mk4)"><text transform="translate(792.45,359.20) scale(0.4244,1)" font-size="110.18" font-weight="bold" fill="#eda806">E</text></g><g filter="url(#mk5)"><text transform="translate(832.57,359.20) scale(0.5101,1)" font-size="110.18" font-weight="bold" fill="#eda806">T</text></g><g><text transform="translate(873.23,359.20) scale(0.7561,1)" font-size="110.18" font-weight="bold" fill="#eda806">I</text></g><g filter="url(#mk7)"><text transform="translate(899.21,359.20) scale(0.5317,1)" font-size="110.18" font-weight="bold" fill="#eda806">N</text></g><g filter="url(#mk8)"><text transform="translate(949.35,359.20) scale(0.4019,1)" font-size="110.18" font-weight="bold" fill="#eda806">G</text></g></g>
<g id="w-business" role="img" aria-label="BUSINESS"><g filter="url(#bs0)"><text transform="translate(622.95,450.60) scale(0.4466,1)" font-size="109.59" font-weight="bold" fill="#042c66">B</text></g><g filter="url(#bs1)"><text transform="translate(668.29,450.60) scale(0.4532,1)" font-size="109.59" font-weight="bold" fill="#042c66">U</text></g><g filter="url(#bs2)"><text transform="translate(715.68,450.60) scale(0.4592,1)" font-size="109.59" font-weight="bold" fill="#042c66">S</text></g><g><text transform="translate(754.85,450.60) scale(0.7158,1)" font-size="109.59" font-weight="bold" fill="#042c66">I</text></g><g filter="url(#bs4)"><text transform="translate(781.15,450.60) scale(0.5057,1)" font-size="109.59" font-weight="bold" fill="#042c66">N</text></g><g filter="url(#bs5)"><text transform="translate(832.49,450.60) scale(0.3654,1)" font-size="109.59" font-weight="bold" fill="#042c66">E</text></g><g filter="url(#bs6)"><text transform="translate(873.39,450.60) scale(0.4491,1)" font-size="109.59" font-weight="bold" fill="#042c66">S</text></g><g filter="url(#bs7)"><text transform="translate(917.42,450.60) scale(0.4551,1)" font-size="109.59" font-weight="bold" fill="#042c66">S</text></g></g>
<circle cx="518" cy="455.4" r="3.3" fill="#0a3576"/>
<circle cx="518" cy="468.6" r="3.3" fill="#0a3576"/>
<circle cx="518" cy="481.8" r="3.3" fill="#0a3576"/>
<circle cx="531.2" cy="455.4" r="3.3" fill="#0a3576"/>
<circle cx="531.2" cy="468.6" r="3.3" fill="#0a3576"/>
<circle cx="531.2" cy="481.8" r="3.3" fill="#0a3576"/>
<circle cx="544.2" cy="455.4" r="3.3" fill="#0a3576"/>
<circle cx="544.2" cy="468.6" r="3.3" fill="#0a3576"/>
<circle cx="544.2" cy="481.8" r="3.3" fill="#0a3576"/>
<circle cx="1037.7" cy="506.2" r="3.1" fill="#eda806"/>
<circle cx="1037.7" cy="518.4" r="3.1" fill="#eda806"/>
<circle cx="1037.7" cy="530.7" r="3.1" fill="#eda806"/>
<circle cx="1037.7" cy="543" r="3.1" fill="#eda806"/>
<circle cx="1037.7" cy="555.2" r="3.1" fill="#eda806"/>
<circle cx="1050.2" cy="506.2" r="3.1" fill="#eda806"/>
<circle cx="1050.2" cy="518.4" r="3.1" fill="#eda806"/>
<circle cx="1050.2" cy="530.7" r="3.1" fill="#eda806"/>
<circle cx="1050.2" cy="543" r="3.1" fill="#eda806"/>
<circle cx="1050.2" cy="555.2" r="3.1" fill="#eda806"/>
<circle cx="1062.8" cy="506.2" r="3.1" fill="#eda806"/>
<circle cx="1062.8" cy="518.4" r="3.1" fill="#eda806"/>
<circle cx="1062.8" cy="530.7" r="3.1" fill="#eda806"/>
<circle cx="1062.8" cy="543" r="3.1" fill="#eda806"/>
<circle cx="1062.8" cy="555.2" r="3.1" fill="#eda806"/>
<text x="661" y="508.6" font-size="9.4" font-weight="bold" fill="#141414" textLength="251.8" lengthAdjust="spacingAndGlyphs">LOREM IPSUM DOLOR SIT AMET, CONSECTETUR</text>
<text x="649.9" y="521.7" font-size="9.4" font-weight="bold" fill="#141414" textLength="274.0" lengthAdjust="spacingAndGlyphs">ADIPISCING ELIT, SED DO EIUSMOD TEMPOR INCIDI</text>
<text x="663.2" y="535.4" font-size="9.4" font-weight="bold" fill="#141414" textLength="248.0" lengthAdjust="spacingAndGlyphs">DUNT UT LABORE ET DOLORE MAGNA ALIQUA.</text>
<rect x="717" y="585.2" width="140.2" height="21.6" rx="10.8" fill="#f0f0f0" fill-opacity="0.35" stroke="#e9a90c" stroke-width="1.5"/>
<text x="731" y="598.9" font-size="7.6" font-weight="bold" fill="#141414" textLength="112.5" lengthAdjust="spacingAndGlyphs">YOURSITE.COM/MARKETING</text>
<path d="M562.0,618.6 A9,9 0 0 1 571.0,618.6 L604.4,637.9 A9,9 0 0 1 608.9,645.7 L608.9,684.3 A9,9 0 0 1 604.4,692.1 L571.0,711.4 A9,9 0 0 1 562.0,711.4 L528.6,692.1 A9,9 0 0 1 524.1,684.3 L524.1,645.7 A9,9 0 0 1 528.6,637.9 Z" fill="none" stroke="#ffffff" stroke-width="1.4" opacity="0.9"/>
<path d="M884.0,760.2 A16,16 0 0 1 900.0,760.2 L964.0,797.2 A16,16 0 0 1 972.0,811.0 L972.0,885.0 A16,16 0 0 1 964.0,898.8 L900.0,935.8 A16,16 0 0 1 884.0,935.8 L820.0,898.8 A16,16 0 0 1 812.0,885.0 L812.0,811.0 A16,16 0 0 1 820.0,797.2 Z" fill="none" stroke="#ffffff" stroke-width="2"/>
<g filter="url(#ds)"><path d="M624.5,645.4 A40,40 0 0 1 664.5,645.4 L762.6,702.1 A40,40 0 0 1 782.6,736.7 L782.6,850.1 A40,40 0 0 1 762.6,884.7 L664.5,941.4 A40,40 0 0 1 624.5,941.4 L526.4,884.7 A40,40 0 0 1 506.4,850.1 L506.4,736.7 A40,40 0 0 1 526.4,702.1 Z" fill="url(#gOr)" clip-path="url(#dome)"/></g>
<g filter="url(#ds)"><path d="M900.5,601.7 A40,40 0 0 1 940.5,601.7 L1038.6,658.4 A40,40 0 0 1 1058.6,693.0 L1058.6,806.4 A40,40 0 0 1 1038.6,841.0 L940.5,897.7 A40,40 0 0 1 900.5,897.7 L802.4,841.0 A40,40 0 0 1 782.4,806.4 L782.4,693.0 A40,40 0 0 1 802.4,658.4 Z" fill="url(#gRing)"/></g>
<path d="M904.5,610.9 A32,32 0 0 1 936.5,610.9 L1032.7,666.5 A32,32 0 0 1 1048.7,694.2 L1048.7,805.2 A32,32 0 0 1 1032.7,832.9 L936.5,888.5 A32,32 0 0 1 904.5,888.5 L808.3,832.9 A32,32 0 0 1 792.3,805.2 L792.3,694.2 A32,32 0 0 1 808.3,666.5 Z" fill="url(#gIn)"/>
<g filter="url(#ds)"><path d="M1011.3,591.9 A6,6 0 0 1 1017.3,591.9 L1036.4,603.0 A6,6 0 0 1 1039.4,608.2 L1039.4,630.2 A6,6 0 0 1 1036.4,635.4 L1017.3,646.5 A6,6 0 0 1 1011.3,646.5 L992.2,635.4 A6,6 0 0 1 989.2,630.2 L989.2,608.2 A6,6 0 0 1 992.2,603.0 Z" fill="#f3f3f3"/></g>
<g filter="url(#ds)"><path d="M538.3,901.0 A7,7 0 0 1 545.3,901.0 L579.0,920.5 A7,7 0 0 1 582.5,926.5 L582.5,965.5 A7,7 0 0 1 579.0,971.5 L545.3,991.0 A7,7 0 0 1 538.3,991.0 L504.6,971.5 A7,7 0 0 1 501.1,965.5 L501.1,926.5 A7,7 0 0 1 504.6,920.5 Z" fill="url(#gNavy)"/></g>
<path d="M540.3,916.5 A3,3 0 0 1 543.3,916.5 L566.3,929.7 A3,3 0 0 1 567.8,932.3 L567.8,958.9 A3,3 0 0 1 566.3,961.5 L543.3,974.7 A3,3 0 0 1 540.3,974.7 L517.3,961.5 A3,3 0 0 1 515.8,958.9 L515.8,932.3 A3,3 0 0 1 517.3,929.7 Z" fill="none" stroke="#ffffff" stroke-width="1.5"/>
<rect x="672" y="954.6" width="12.4" height="12.4" rx="3.6" fill="#0a0a0a"/><rect x="674.8" y="957.4" width="6.8" height="6.8" rx="1.8" fill="none" stroke="#fff" stroke-width="0.9"/><circle cx="678.2" cy="960.8" r="1.6" fill="none" stroke="#fff" stroke-width="0.8"/>
<circle cx="763.2" cy="960.8" r="6.2" fill="#0a0a0a"/><path d="M764.4,965.6 V961 H766 L766.3,959.2 H764.4 V958.2 C764.4,957.6 764.7,957.4 765.3,957.4 H766.3 V955.9 C765.8,955.8 765.3,955.8 764.8,955.8 C763.3,955.8 762.4,956.7 762.4,958.2 V959.2 H760.9 V961 H762.4 V965.6 Z" fill="#fff"/>
<rect x="840.6" y="954.6" width="12.4" height="12.4" rx="4.4" fill="#0a0a0a"/><path d="M850.2,958.4 C849.8,958.6 849.4,958.7 849,958.8 C849.4,958.5 849.7,958.1 849.9,957.7 C849.5,957.9 849,958.1 848.6,958.2 C847.4,957 845.4,958 845.8,959.6 C844.2,959.5 842.9,958.8 842,957.7 C841.5,958.6 841.8,959.6 842.6,960.2 C842.3,960.2 842,960.1 841.7,959.9 C841.7,960.9 842.4,961.7 843.3,961.9 C843,962 842.7,962 842.4,961.9 C842.7,962.7 843.4,963.3 844.3,963.3 C843.5,963.9 842.5,964.2 841.5,964.1 C845.5,966.4 849.9,963.5 849.4,959.3 C849.7,959.1 850,958.8 850.2,958.4 Z" fill="#fff"/>
<text x="689" y="963" font-size="6.2" font-weight="bold" fill="#141414" textLength="52.0" lengthAdjust="spacingAndGlyphs">Instagram_Account</text>
<text x="773.6" y="963" font-size="6.2" font-weight="bold" fill="#141414" textLength="50.9" lengthAdjust="spacingAndGlyphs">Facebook_Account</text>
<text x="857.7" y="963" font-size="6.2" font-weight="bold" fill="#141414" textLength="43.5" lengthAdjust="spacingAndGlyphs">Twitter_Account</text></g></svg>
<div id="panels" style="position:absolute;left:1497px;top:91px;width:422px;height:885px;background:#535353"></div>
<svg style="position:absolute;left:1497px;top:91px;" width="422" height="885" viewBox="1497 91 422 885"><rect x="1497" y="91" width="422" height="18.8" fill="#424242" /><rect x="1497" y="109.6" width="422" height="1" fill="#383838" /><path d="M1905,97.6 L1909,101 L1905,104.4 M1910.8,97.6 L1914.8,101 L1910.8,104.4" fill="none" stroke="#e0e0e0" stroke-width="1.2"/><rect x="1497" y="110.6" width="422" height="41.6" fill="#424242" /><rect x="1497" y="151" width="422" height="1.4" fill="#383838" /><rect x="1613" y="110.6" width="71" height="42" fill="#535353" /><rect x="1611.9" y="110.6" width="1" height="41" fill="#383838" /><rect x="1683.5" y="110.6" width="1" height="41" fill="#383838" /><rect x="1783.1" y="110.6" width="1" height="41" fill="#383838" /><rect x="1900.6" y="126.6" width="14.6" height="1.5" fill="#d0d0d0" /><rect x="1900.6" y="129.9" width="14.6" height="1.5" fill="#d0d0d0" /><rect x="1900.6" y="133.2" width="14.6" height="1.5" fill="#d0d0d0" /><rect x="1900.6" y="136.5" width="14.6" height="1.5" fill="#d0d0d0" /><rect x="1503" y="166.5" width="129.4" height="26.6" rx="4" fill="#454545" stroke="#626262" stroke-width="1"/><circle cx="1521.4" cy="177.4" r="5" fill="none" stroke="#e4e4e4" stroke-width="1.8"/><path d="M1525.2,181.4 L1529.8,186" stroke="#e4e4e4" stroke-width="2.4" stroke-linecap="round"/><path d="M1618,179.4 L1622.5,183.8 L1627,179.4" fill="none" stroke="#cfcfcf" stroke-width="1.2"/><rect x="1651.7" y="172" width="17" height="14" fill="none" stroke="#dedede" stroke-width="1.4"/><path fill="#dedede" d="M1654,184 L1658,177.6 L1660.6,181 L1662.6,178.8 L1666.6,184 Z"/><circle cx="1695.7" cy="179" r="7.6" fill="none" stroke="#dedede" stroke-width="1.4"/><path fill="#dedede" d="M1701.1,173.6 A7.6,7.6 0 0 1 1690.3,184.4 Z"/><path fill="#dedede" d="M1724,172.4 H1739 V177 H1737.6 C1737.4,175 1737,174.2 1735,174.2 H1733 V183.4 C1733,184.6 1733.4,184.8 1735.4,185 V186.4 H1727.6 V185 C1729.6,184.8 1730,184.6 1730,183.4 V174.2 H1728 C1726,174.2 1725.6,175 1725.4,177 H1724 Z"/><rect x="1761" y="172.4" width="13.4" height="13.4" fill="none" stroke="#dedede" stroke-width="1.5"/><rect x="1759.4" y="170.8" width="3.2" height="3.2" fill="#555" stroke="#dedede" stroke-width="0.9"/><rect x="1772.8000000000002" y="170.8" width="3.2" height="3.2" fill="#555" stroke="#dedede" stroke-width="0.9"/><rect x="1759.4" y="184.20000000000002" width="3.2" height="3.2" fill="#555" stroke="#dedede" stroke-width="0.9"/><rect x="1772.8000000000002" y="184.20000000000002" width="3.2" height="3.2" fill="#555" stroke="#dedede" stroke-width="0.9"/><path d="M1803,178 V171.8 H1808.4 L1812.4,175.8 V185.6 H1807" fill="none" stroke="#dedede" stroke-width="1.4"/><path d="M1808.2,171.8 V176 H1812.4" fill="none" stroke="#dedede" stroke-width="1.1"/><rect x="1797.4" y="179" width="8.6" height="8" fill="#dedede"/><rect x="1831.4" y="166.4" width="12.6" height="26" rx="6.3" fill="#484848" stroke="#3f3f3f" stroke-width="1"/><circle cx="1837.7" cy="172.6" r="5.8" fill="#e4e4e4"/><rect x="1497" y="199.6" width="422" height="1.8" fill="#434343" /><rect x="1503" y="208.8" width="192" height="26.4" rx="4" fill="#454545" stroke="#626262" stroke-width="1"/><path d="M1680.8,219.8 L1685.3,224.20000000000002 L1689.8,219.8" fill="none" stroke="#cfcfcf" stroke-width="1.2"/><rect x="1767.6" y="209.5" width="74.8" height="23" rx="3.5" fill="#454545" stroke="#626262" stroke-width="1"/><rect x="1820" y="209.5" width="1" height="23" fill="#626262"/><path d="M1827,219.5 L1831.5,223.9 L1836,219.5" fill="none" stroke="#cfcfcf" stroke-width="1.2"/><rect x="1497" y="241.2" width="422" height="1.6" fill="#434343" /><rect x="1767.6" y="251.2" width="74.8" height="23" rx="3.5" fill="#454545" stroke="#626262" stroke-width="1"/><rect x="1820" y="251.2" width="1" height="23" fill="#626262"/><path d="M1827,261.2 L1831.5,265.59999999999997 L1836,261.2" fill="none" stroke="#cfcfcf" stroke-width="1.2"/><rect x="1556.6" y="255.4" width="15" height="15" fill="#6a6a6a" stroke="#8e8e8e" stroke-width="1"/><g fill="#9c9c9c"><rect x="1557.1" y="255.9" width="4.7" height="4.7"/><rect x="1566.4" y="255.9" width="4.7" height="4.7"/><rect x="1561.8" y="260.6" width="4.6" height="4.6"/><rect x="1557.1" y="265.2" width="4.7" height="4.7"/><rect x="1566.4" y="265.2" width="4.7" height="4.7"/></g><path fill="#8c8c8c" d="M1608,254.8 C1606.4,259.6 1603,264 1599.8,266.6 L1597.6,264.6 C1600.6,261 1604,257 1608,254.8 Z M1596.8,265.4 L1599,267.4 C1600,270.4 1596,272 1589.4,271.6 C1592.4,270.4 1592.4,266.6 1596.8,265.4 Z"/><g fill="#dedede"><rect x="1621.8999999999999" y="262.25" width="14.8" height="1.5"/><rect x="1628.55" y="255.6" width="1.5" height="14.8"/><path d="M1629.3,253.6 l3.5,4.1 h-7.0z M1629.3,272.4 l3.5,-4.1 h-7.0z M1619.8999999999999,263 l4.1,-3.5 v7.0z M1638.7,263 l-4.1,-3.5 v7.0z"/></g><path d="M1656.4,257.8 H1665.4 L1669.8,262.2 V268.6 H1656.4 Z M1665,257.8 V262.4 H1669.8" fill="none" stroke="#dedede" stroke-width="1.4"/><g stroke="#dedede" stroke-width="1.3"><path d="M1652,257.8 H1654.4 M1656.4,253.6 V255.8 M1671.6,257.8 H1674 M1669.8,253.6 V255.8 M1652,268.6 H1654.4 M1656.4,270.6 V273 M1671.6,268.6 H1674 M1669.8,270.6 V273"/></g><rect x="1688" y="261.6" width="16" height="10.4" rx="1.2" fill="#dedede"/><path d="M1691.4,262 V259 A4.6,4.6 0 0 1 1700.6,259 V262" fill="none" stroke="#dedede" stroke-width="1.9"/><circle cx="1696" cy="266.6" r="1.5" fill="#535353"/><rect x="1541" y="287" width="1" height="274" fill="#4a4a4a" /><rect x="1884" y="287" width="15" height="274" fill="#484848" /><rect x="1899" y="287" width="20" height="274" fill="#4b4b4b" /><rect x="1884" y="398" width="15" height="86" fill="#535353" /><rect x="1541.5" y="338" width="342.5" height="60" fill="#6b6b6b" /><rect x="1884" y="338" width="15" height="60" fill="#5e5e5e" /><rect x="1497" y="483.2" width="402" height="1.6" fill="#4a4a4a" /><rect x="1497" y="544.2" width="402" height="1.6" fill="#4a4a4a" /><path fill="#dedede" d="M1510.5,307.7 C1514.3,299.5 1526.3,299.5 1530.1,307.7 C1526.3,315.9 1514.3,315.9 1510.5,307.7 Z"/><circle cx="1520.3" cy="307.09999999999997" r="3.9" fill="#535353"/><circle cx="1521.3" cy="305.7" r="1" fill="#dedede"/><rect x="1572.5" y="286.6" width="35.5" height="43.5" fill="#ffffff" stroke="#2f2f2f" stroke-width="1.4"/><rect x="1585.4" y="307.20000000000005" width="23" height="23" fill="#555555" stroke="#3a3a3a" stroke-width="1"/><rect x="1591.4" y="313.20000000000005" width="11.4" height="11.4" fill="none" stroke="#dedede" stroke-width="1.4"/><rect x="1590.0" y="311.80000000000007" width="2.8" height="2.8" fill="#555" stroke="#dedede" stroke-width="0.9"/><rect x="1601.4" y="311.80000000000007" width="2.8" height="2.8" fill="#555" stroke="#dedede" stroke-width="0.9"/><rect x="1590.0" y="323.20000000000005" width="2.8" height="2.8" fill="#555" stroke="#dedede" stroke-width="0.9"/><rect x="1601.4" y="323.20000000000005" width="2.8" height="2.8" fill="#555" stroke="#dedede" stroke-width="0.9"/><path d="M1888,305.2 L1892.5,309.59999999999997 L1897,305.2" fill="none" stroke="#cfcfcf" stroke-width="1.2"/><path d="M1908,304.79999999999995 L1912.5,300.4 L1917,304.79999999999995" fill="none" stroke="#9a9a9a" stroke-width="1.2"/><path fill="#dedede" d="M1510.5,368.6 C1514.3,360.40000000000003 1526.3,360.40000000000003 1530.1,368.6 C1526.3,376.8 1514.3,376.8 1510.5,368.6 Z"/><circle cx="1520.3" cy="368.0" r="3.9" fill="#535353"/><circle cx="1521.3" cy="366.6" r="1" fill="#dedede"/><rect x="1572.5" y="345.6" width="35.5" height="43.5" fill="#ffffff" stroke="#2f2f2f" stroke-width="1.4"/><rect x="1575.2" y="372" width="10.4" height="14.6" fill="#ffb9a0"/><rect x="1585.4" y="366.20000000000005" width="23" height="23" fill="#555555" stroke="#3a3a3a" stroke-width="1"/><rect x="1591.4" y="372.20000000000005" width="11.4" height="11.4" fill="none" stroke="#dedede" stroke-width="1.4"/><rect x="1590.0" y="370.80000000000007" width="2.8" height="2.8" fill="#555" stroke="#dedede" stroke-width="0.9"/><rect x="1601.4" y="370.80000000000007" width="2.8" height="2.8" fill="#555" stroke="#dedede" stroke-width="0.9"/><rect x="1590.0" y="382.20000000000005" width="2.8" height="2.8" fill="#555" stroke="#dedede" stroke-width="0.9"/><rect x="1601.4" y="382.20000000000005" width="2.8" height="2.8" fill="#555" stroke="#dedede" stroke-width="0.9"/><path d="M1569.6,350 V342.4 H1577 M1603,342.4 H1610.6 V350 M1610.6,386 V393.8 H1603 M1577,393.8 H1569.6 V386" fill="none" stroke="#f4f4f4" stroke-width="1.2"/><path d="M1888,370.4 L1892.5,366 L1897,370.4" fill="none" stroke="#cfcfcf" stroke-width="1.2"/><path fill="#dedede" d="M1595.8,413.8 C1599.6,405.6 1611.6,405.6 1615.3999999999999,413.8 C1611.6,422.0 1599.6,422.0 1595.8,413.8 Z"/><circle cx="1605.6" cy="413.2" r="3.9" fill="#535353"/><circle cx="1606.6" cy="411.8" r="1" fill="#dedede"/><path fill="#dedede" d="M1621.8,470.4 C1625.6,462.2 1637.6,462.2 1641.3999999999999,470.4 C1637.6,478.59999999999997 1625.6,478.59999999999997 1621.8,470.4 Z"/><circle cx="1631.6" cy="469.79999999999995" r="3.9" fill="#535353"/><circle cx="1632.6" cy="468.4" r="1" fill="#dedede"/><rect x="1902.4" y="405.6" width="20" height="26.6" rx="3" fill="#6b6b6b"/><path fill="#dedede" d="M1510.5,515.6 C1514.3,507.40000000000003 1526.3,507.40000000000003 1530.1,515.6 C1526.3,523.8000000000001 1514.3,523.8000000000001 1510.5,515.6 Z"/><circle cx="1520.3" cy="515.0" r="3.9" fill="#535353"/><circle cx="1521.3" cy="513.6" r="1" fill="#dedede"/><rect x="1572.5" y="491.8" width="35.5" height="43.5" fill="#ffffff" stroke="#2f2f2f" stroke-width="1.4"/><rect x="1582.6" y="508" width="4" height="4" fill="#ffb9a0"/><rect x="1585.4" y="512.4" width="23" height="23" fill="#555555" stroke="#3a3a3a" stroke-width="1"/><rect x="1591.4" y="518.4" width="11.4" height="11.4" fill="none" stroke="#dedede" stroke-width="1.4"/><rect x="1590.0" y="517.0" width="2.8" height="2.8" fill="#555" stroke="#dedede" stroke-width="0.9"/><rect x="1601.4" y="517.0" width="2.8" height="2.8" fill="#555" stroke="#dedede" stroke-width="0.9"/><rect x="1590.0" y="528.4" width="2.8" height="2.8" fill="#555" stroke="#dedede" stroke-width="0.9"/><rect x="1601.4" y="528.4" width="2.8" height="2.8" fill="#555" stroke="#dedede" stroke-width="0.9"/><path d="M1888,513.4 L1892.5,517.8 L1897,513.4" fill="none" stroke="#cfcfcf" stroke-width="1.2"/><path d="M1908,543.4 L1912.5,547.8 L1917,543.4" fill="none" stroke="#9a9a9a" stroke-width="1.2"/><rect x="1572.5" y="553.6" width="35.5" height="9" fill="#ffffff" stroke="#2f2f2f" stroke-width="1.4"/><rect x="1497" y="561" width="422" height="2" fill="#3e3e3e" /><rect x="1497" y="563" width="422" height="35.6" fill="#535353" /><rect x="1497" y="598.4" width="422" height="3.6" fill="#3a3a3a" /><g fill="none" stroke="#8e8e8e" stroke-width="1.6"><path d="M1626,575.6 H1623.6 A4.9,4.9 0 0 0 1623.6,585.4 H1626 M1631,575.6 H1633.4 A4.9,4.9 0 0 1 1633.4,585.4 H1631"/><path d="M1623.4,580.5 H1633.6" stroke-width="2"/></g><path fill="#e4e4e4" d="M1678,589 H1684 L1681,592.2 Z M1759,589 H1765 L1762,592.2 Z"/><rect x="1701" y="572.4" width="18.8" height="14.2" rx="1" fill="#dedede"/><circle cx="1710.4" cy="579.5" r="4.4" fill="#535353"/><circle cx="1751.2" cy="579.3" r="7.6" fill="none" stroke="#dedede" stroke-width="1.4"/><path fill="#dedede" d="M1756.6,573.9 A7.6,7.6 0 0 1 1745.8,584.7 Z"/><path fill="#dedede" d="M1781.8,574.4 C1781.8,573 1782.4,572.2 1783.8,572.2 H1789 L1790.4,574.4 H1798.4 C1799.6,574.4 1800,575 1800,576.2 V586 C1800,587 1799.4,587.6 1798.4,587.6 H1783.4 C1782.4,587.6 1781.8,587 1781.8,586 Z"/><rect x="1824.4" y="572.2" width="15" height="16" fill="none" stroke="#dedede" stroke-width="1.4"/><path d="M1828,580.2 H1835.8 M1831.9,576.3 V584.1" stroke="#dedede" stroke-width="1.6"/><path d="M1864.4,574.6 H1879.6" stroke="#dedede" stroke-width="1.5"/><path d="M1868.6,574 V571.8 H1875.4 V574" fill="none" stroke="#dedede" stroke-width="1.3"/><path d="M1866,575.4 L1867,588.4 H1877 L1878,575.4" fill="none" stroke="#dedede" stroke-width="1.5"/><path d="M1869.4,577.6 V586 M1872,577.6 V586 M1874.6,577.6 V586" stroke="#dedede" stroke-width="1.4"/><rect x="1497" y="602" width="422" height="41.6" fill="#424242" /><rect x="1497" y="642.4" width="422" height="1.2" fill="#383838" /><rect x="1647" y="602" width="91" height="42" fill="#535353" /><rect x="1582.0" y="602" width="1" height="41" fill="#383838" /><rect x="1646.5" y="602" width="1" height="41" fill="#383838" /><rect x="1737.5" y="602" width="1" height="41" fill="#383838" /><rect x="1900.6" y="618.0" width="14.6" height="1.5" fill="#d0d0d0" /><rect x="1900.6" y="621.3" width="14.6" height="1.5" fill="#d0d0d0" /><rect x="1900.6" y="624.6" width="14.6" height="1.5" fill="#d0d0d0" /><rect x="1900.6" y="627.9" width="14.6" height="1.5" fill="#d0d0d0" /><rect x="1531.5" y="659.6" width="380" height="31.4" fill="#424242" stroke="#666666" stroke-width="1"/><circle cx="1515.4" cy="673.4" r="5.2" fill="none" stroke="#e4e4e4" stroke-width="1.9"/><path d="M1519.4,677.6 L1523.8,682" stroke="#e4e4e4" stroke-width="2.6" stroke-linecap="round"/><rect x="1507" y="704" width="404.5" height="28.4" fill="#474747" /><rect x="1508.6" y="705.8" width="24.2" height="24.6" fill="#0050cd" stroke="#3c3c3c" stroke-width="0.8"/><rect x="1535.6" y="705.8" width="24.2" height="24.6" fill="#4400ff" stroke="#3c3c3c" stroke-width="0.8"/><rect x="1562.6" y="705.8" width="24.2" height="24.6" fill="#ffffff" stroke="#3c3c3c" stroke-width="0.8"/><rect x="1589.7" y="705.8" width="24.2" height="24.6" fill="#8c0024" stroke="#3c3c3c" stroke-width="0.8"/><rect x="1616.7" y="705.8" width="24.2" height="24.6" fill="#000000" stroke="#3c3c3c" stroke-width="0.8"/><rect x="1643.7" y="705.8" width="24.2" height="24.6" fill="#0066ff" stroke="#3c3c3c" stroke-width="0.8"/><rect x="1670.7" y="705.8" width="24.2" height="24.6" fill="#000000" stroke="#3c3c3c" stroke-width="0.8"/><rect x="1697.7" y="705.8" width="24.2" height="24.6" fill="#ff0000" stroke="#3c3c3c" stroke-width="0.8"/><rect x="1724.8" y="705.8" width="24.2" height="24.6" fill="#ffaaee" stroke="#3c3c3c" stroke-width="0.8"/><rect x="1751.8" y="705.8" width="24.2" height="24.6" fill="#00ffb4" stroke="#3c3c3c" stroke-width="0.8"/><rect x="1778.8" y="705.8" width="24.2" height="24.6" fill="#000000" stroke="#3c3c3c" stroke-width="0.8"/><rect x="1497" y="742.4" width="422" height="2" fill="#484848" /><rect x="1497" y="744.4" width="400" height="222.6" fill="#424242" /><rect x="1897" y="744.4" width="22" height="222.6" fill="#4d4d4d" /><rect x="1497" y="787.3499999999999" width="400" height="1.2" fill="#474747" /><path d="M1511.8,759.4 L1516.6,766.4 L1511.8,773.4" fill="none" stroke="#d8d8d8" stroke-width="1.1"/><path fill="#dedede" d="M1528,761.6 H1549.8 V774.6 H1528 Z M1528,760.4 V758.6 H1538.4 V760.4 Z"/><rect x="1497" y="830.9" width="400" height="1.2" fill="#474747" /><path d="M1511.8,802.9 L1516.6,809.9 L1511.8,816.9" fill="none" stroke="#d8d8d8" stroke-width="1.1"/><path fill="#dedede" d="M1528,805.1 H1549.8 V818.1 H1528 Z M1528,803.9 V802.1 H1538.4 V803.9 Z"/><rect x="1497" y="874.4499999999999" width="400" height="1.2" fill="#474747" /><path d="M1511.8,846.5 L1516.6,853.5 L1511.8,860.5" fill="none" stroke="#d8d8d8" stroke-width="1.1"/><path fill="#dedede" d="M1528,848.7 H1549.8 V861.7 H1528 Z M1528,847.5 V845.7 H1538.4 V847.5 Z"/><rect x="1497" y="917.9999999999999" width="400" height="1.2" fill="#474747" /><path d="M1511.8,890.0 L1516.6,897.0 L1511.8,904.0" fill="none" stroke="#d8d8d8" stroke-width="1.1"/><path fill="#dedede" d="M1528,892.2 H1549.8 V905.2 H1528 Z M1528,891.0 V889.2 H1538.4 V891.0 Z"/><rect x="1497" y="961.55" width="400" height="1.2" fill="#474747" /><path d="M1511.8,933.6 L1516.6,940.6 L1511.8,947.6" fill="none" stroke="#d8d8d8" stroke-width="1.1"/><path fill="#dedede" d="M1528,935.8 H1549.8 V948.8 H1528 Z M1528,934.6 V932.8 H1538.4 V934.6 Z"/><rect x="1902.6" y="770" width="20" height="97" rx="3" fill="#6b6b6b"/><path d="M1908,762.8 L1912.5,758.4 L1917,762.8" fill="none" stroke="#9a9a9a" stroke-width="1.2"/><path d="M1908,950.4 L1912.5,954.8 L1917,950.4" fill="none" stroke="#c4c4c4" stroke-width="1.2"/><rect x="1497" y="967" width="422" height="2.4" fill="#3a3a3a" /><rect x="1497" y="969.4" width="422" height="7" fill="#535353" /><rect x="1764.4" y="968.4" width="42" height="10" fill="#4a4a4a" stroke="#6c6c6c" stroke-width="1"/></svg>
<span class="t" style="left:1511.0px;top:120.5px;font-size:15.4px;color:#a2a2a2;font-weight:bold;transform:scaleX(0.9542);">Adjustments</span>
<span class="t" style="left:1626.6px;top:120.5px;font-size:15.4px;color:#f4f4f4;font-weight:bold;transform:scaleX(0.8941);">Layers</span>
<span class="t" style="left:1697.4px;top:120.5px;font-size:15.4px;color:#a2a2a2;font-weight:bold;transform:scaleX(0.9531);">Properties</span>
<span class="t" style="left:1536.5px;top:172.2px;font-size:16px;color:#e6e6e6;transform:scaleX(0.8587);">Kind</span>
<span class="t" style="left:1515.0px;top:214.2px;font-size:16px;color:#e6e6e6;transform:scaleX(0.9323);">Luminosity</span>
<span class="t" style="left:1706.0px;top:214.2px;font-size:16px;color:#e6e6e6;transform:scaleX(0.9372);">Opacity:</span>
<span class="t" style="left:1774.6px;top:214.2px;font-size:16px;color:#e6e6e6;transform:scaleX(0.9286);">100%</span>
<span class="t" style="left:1506.4px;top:255.8px;font-size:16px;color:#e6e6e6;transform:scaleX(0.9518);">Lock:</span>
<span class="t" style="left:1740.4px;top:255.8px;font-size:16px;color:#e6e6e6;transform:scaleX(0.8278);">Fill:</span>
<span class="t" style="left:1774.6px;top:255.8px;font-size:16px;color:#e6e6e6;transform:scaleX(0.9286);">100%</span>
<span class="t" style="left:1622.0px;top:299.2px;font-size:16px;color:#e6e6e6;transform:scaleX(0.8862);">Shape</span>
<span class="t" style="left:1861.0px;top:298.2px;font-size:20px;color:#d8d8d8;font-style:italic;transform:scaleX(1.0671);">fx</span>
<span class="t" style="left:1622.0px;top:359.8px;font-size:16px;color:#e6e6e6;transform:scaleX(0.8862);">Shape</span>
<span class="t" style="left:1861.0px;top:358.8px;font-size:20px;color:#d8d8d8;font-style:italic;transform:scaleX(1.0671);">fx</span>
<span class="t" style="left:1622.0px;top:506.6px;font-size:16px;color:#e6e6e6;transform:scaleX(0.8862);">Shape</span>
<span class="t" style="left:1861.0px;top:505.6px;font-size:20px;color:#d8d8d8;font-style:italic;transform:scaleX(1.0671);">fx</span>
<span class="t" style="left:1662.0px;top:570.4px;font-size:20px;color:#d8d8d8;font-style:italic;transform:scaleX(1.0028);">fx</span>
<span class="t" style="left:1624.4px;top:402.5px;font-size:15.4px;color:#e6e6e6;transform:scaleX(0.9488);">Effects</span>
<span class="t" style="left:1648.8px;top:431.5px;font-size:15.4px;color:#e6e6e6;transform:scaleX(0.9582);">Color Overlay</span>
<span class="t" style="left:1648.8px;top:459.7px;font-size:15.4px;color:#e6e6e6;transform:scaleX(0.9467);">Gradient Overlay</span>
<span class="t" style="left:1511.5px;top:613.3px;font-size:15.6px;color:#a2a2a2;font-weight:bold;transform:scaleX(0.9211);">Patterns</span>
<span class="t" style="left:1597.0px;top:613.3px;font-size:15.6px;color:#a2a2a2;font-weight:bold;transform:scaleX(0.9183);">Color</span>
<span class="t" style="left:1661.0px;top:613.3px;font-size:15.6px;color:#f4f4f4;font-weight:bold;transform:scaleX(0.8976);">Swatches</span>
<span class="t" style="left:1538.0px;top:667.1px;font-size:18px;color:#999999;transform:scaleX(0.9352);">Search Swatches</span>
<span class="t" style="left:1564.6px;top:758.7px;font-size:17.6px;color:#ececec;transform:scaleX(0.8626);">RGB</span>
<span class="t" style="left:1564.6px;top:802.3px;font-size:17.6px;color:#ececec;transform:scaleX(0.8928);">CMYK</span>
<span class="t" style="left:1564.6px;top:845.8px;font-size:17.6px;color:#ececec;transform:scaleX(0.9441);">Grayscale</span>
<span class="t" style="left:1564.6px;top:889.4px;font-size:17.6px;color:#ececec;transform:scaleX(0.9383);">Pastel</span>
<span class="t" style="left:1564.6px;top:932.9px;font-size:17.6px;color:#ececec;transform:scaleX(1.0166);">Light</span>
<svg style="position:absolute;left:1220px;top:340px;" width="280" height="60" viewBox="1220 340 280 60"><path fill="#e60000" d="M1234,368.9 L1467,363.6 L1458.4,359.8 C1455.6,357.8 1458.2,353.6 1461.8,355.2 L1484.4,368.8 L1461.8,382.2 C1458.2,383.8 1455.6,379.6 1458.4,377.6 L1467,374.4 Z"/></svg>
<svg style="position:absolute;left:1490px;top:330px;" width="420" height="80" viewBox="1490 330 420 80"><rect id="highlight" x="1497.25" y="338.15" width="405.8" height="61.5" rx="2" fill="none" stroke="#e60000" stroke-width="5.8"/></svg>
</body></html>
